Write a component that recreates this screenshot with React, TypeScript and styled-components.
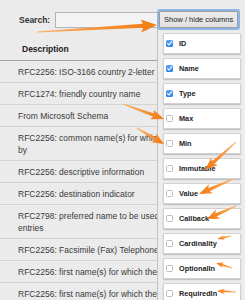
import React from 'react';
import styled, { createGlobalStyle } from 'styled-components';

interface ColumnOption {
  label: string;
  checked: boolean;
}

interface ArrowSpec {
  tail: [number, number];
  tip: [number, number];
  tailWidth: number;
  shaftWidth: number;
  headWidth: number;
  headLength: number;
}

const descriptions = [
  'RFC2256: ISO-3166 country 2-letter code',
  'RFC1274: friendly country name',
  'From Microsoft Schema',
  'RFC2256: common name(s) for which the entity is known by',
  'RFC2256: descriptive information',
  'RFC2256: destination indicator',
  'RFC2798: preferred name to be used when displaying entries',
  'RFC2256: Facsimile (Fax) Telephone Number',
  'RFC2256: first name(s) for which the entity is known by',
  'RFC2256: first name(s) for which the entity is known by',
];

const columns: ColumnOption[] = [
  { label: 'ID', checked: true },
  { label: 'Name', checked: true },
  { label: 'Type', checked: true },
  { label: 'Max', checked: false },
  { label: 'Min', checked: false },
  { label: 'Immutable', checked: false },
  { label: 'Value', checked: false },
  { label: 'Callback', checked: false },
  { label: 'Cardinality', checked: false },
  { label: 'OptionalIn', checked: false },
  { label: 'RequiredIn', checked: false },
];

const arrows: ArrowSpec[] = [
  { tail: [37, 32], tip: [157, 25], tailWidth: 1, shaftWidth: 4, headWidth: 13, headLength: 14 },
  { tail: [123, 104], tip: [164, 119], tailWidth: 1, shaftWidth: 3.5, headWidth: 10, headLength: 11 },
  { tail: [137, 128], tip: [164, 144], tailWidth: 1, shaftWidth: 3.5, headWidth: 10, headLength: 10 },
  { tail: [236, 142], tip: [205, 170], tailWidth: 1, shaftWidth: 3.5, headWidth: 10, headLength: 11 },
  { tail: [233, 179], tip: [199, 194], tailWidth: 1, shaftWidth: 3.5, headWidth: 10, headLength: 11 },
  { tail: [236, 206], tip: [207, 219], tailWidth: 1, shaftWidth: 3.5, headWidth: 10, headLength: 10 },
  { tail: [231, 236], tip: [217, 239], tailWidth: 0.8, shaftWidth: 2, headWidth: 5, headLength: 6 },
  { tail: [232, 268], tip: [216, 263], tailWidth: 0.8, shaftWidth: 2, headWidth: 6, headLength: 6 },
  { tail: [236, 292], tip: [217, 291], tailWidth: 0.8, shaftWidth: 2, headWidth: 6, headLength: 6 },
];

// tapered arrow outline: thin tail, widening shaft, barbed head
const arrowPoints = ({ tail, tip, tailWidth, shaftWidth, headWidth, headLength }: ArrowSpec) => {
  const dx = tip[0] - tail[0];
  const dy = tip[1] - tail[1];
  const len = Math.hypot(dx, dy);
  const ux = dx / len;
  const uy = dy / len;
  const nx = -uy;
  const ny = ux;
  const bx = tip[0] - ux * headLength;
  const by = tip[1] - uy * headLength;
  const pt = (x: number, y: number, w: number) => `${(x + nx * w).toFixed(2)},${(y + ny * w).toFixed(2)}`;
  return [
    pt(tail[0], tail[1], tailWidth / 2),
    pt(bx, by, shaftWidth / 2),
    pt(bx - ux * 2, by - uy * 2, headWidth / 2),
    `${tip[0]},${tip[1]}`,
    pt(bx - ux * 2, by - uy * 2, -headWidth / 2),
    pt(bx, by, -shaftWidth / 2),
    pt(tail[0], tail[1], -tailWidth / 2),
  ].join(' ');
};

const App: React.FC = () => {
  return (
    <>
      <GlobalStyle />
      <Page>
        <TopBar>
          <SearchLabel>Search:</SearchLabel>
          <SearchInput type="text" />
          <ColumnsButton>Show / hide columns</ColumnsButton>
        </TopBar>

        <Table>
          <HeaderCell>Description</HeaderCell>
          {descriptions.map((text, i) => (
            <Row key={i}>{text}</Row>
          ))}
        </Table>

        <ColumnMenu>
          {columns.map(col => (
            <ColumnItem key={col.label}>
              <Check checked={col.checked}>
                {col.checked && (
                  <svg width="7" height="7" viewBox="0 0 7 7">
                    <path d="M1.6 3.6 L3 5 L5.5 1.8" fill="none" stroke="#fff" strokeWidth="1.1" strokeLinecap="round" strokeLinejoin="round" />
                  </svg>
                )}
              </Check>
              <ColumnLabel>{col.label}</ColumnLabel>
            </ColumnItem>
          ))}
        </ColumnMenu>

        <ArrowLayer width="245" height="300" viewBox="0 0 245 300">
          <defs>
            {arrows.map((a, i) => (
              <linearGradient
                key={i}
                id={`arrow-grad-${i}`}
                gradientUnits="userSpaceOnUse"
                x1={a.tail[0]}
                y1={a.tail[1]}
                x2={a.tip[0]}
                y2={a.tip[1]}
              >
                <stop offset="0" stopColor="#fbb36a" />
                <stop offset="0.5" stopColor="#f7923a" />
                <stop offset="1" stopColor="#f47a12" />
              </linearGradient>
            ))}
          </defs>
          {arrows.map((a, i) => (
            <polygon key={i} points={arrowPoints(a)} fill={`url(#arrow-grad-${i})`} />
          ))}
        </ArrowLayer>
      </Page>
    </>
  );
};

const GlobalStyle = createGlobalStyle`
  html, body {
    margin: 0;
    padding: 0;
    background: #ebebeb;
    overflow: hidden;
  }
  body {
    font-family: "Liberation Sans", Arial, sans-serif;
  }
`;

const Page = styled.div`
  position: relative;
  width: 245px;
  height: 300px;
  overflow: hidden;
  background: #ebebeb;
  color: #333;
`;

const TopBar = styled.div`
  display: flex;
  align-items: center;
  height: 21px;
  padding: 9px 0 0 19px;
`;

const SearchLabel = styled.label`
  font-size: 8.5px;
  font-weight: bold;
  color: #333;
  margin-right: 5px;
`;

const SearchInput = styled.input`
  box-sizing: border-box;
  width: 103px;
  height: 16px;
  margin: 0;
  padding: 0 3px;
  border: 1px solid #b3b3b3;
  background: #f3f3f3;
  outline: none;
`;

const ColumnsButton = styled.button`
  box-sizing: border-box;
  width: 79px;
  height: 17px;
  margin: 0 0 0 1px;
  padding: 0;
  border: 1px solid #9c9c9c;
  border-radius: 1px;
  background: linear-gradient(#ececec, #e1e1e1);
  box-shadow: 0 0 0 2px #8db5e6;
  font-family: "Liberation Sans", Arial, sans-serif;
  font-size: 7.5px;
  color: #222;
  white-space: nowrap;
  position: relative;
  z-index: 2;
`;

const Table = styled.div`
  display: flex;
  flex-direction: column;
  width: 157px;
  height: 270px;
  overflow: hidden;
`;

const HeaderCell = styled.div`
  flex-shrink: 0;
  padding: 13px 0 5px 22px;
  line-height: 12px;
  font-size: 8.5px;
  font-weight: bold;
  color: #222;
  border-bottom: 1px solid #a3a3a3;
`;

const Row = styled.div`
  flex-shrink: 0;
  width: 25.6em;
  padding: 4.5px 0 4.5px 18px;
  line-height: 12px;
  font-size: 8.5px;
  color: #3a3a3a;
  border-bottom: 1px solid #d3d3d3;
`;

const ColumnMenu = styled.div`
  position: absolute;
  left: 157px;
  top: 29px;
  right: 0;
  bottom: 0;
  z-index: 1;
  display: flex;
  flex-direction: column;
  gap: 4px;
  padding: 4px 0 0 5px;
  background: #ededed;
  border-left: 1px solid #c2c2c2;
  overflow: hidden;
`;

const ColumnItem = styled.div`
  box-sizing: border-box;
  display: flex;
  align-items: center;
  gap: 6px;
  flex-shrink: 0;
  width: 78px;
  height: 21px;
  padding-left: 2px;
  background: #fff;
  border: 1px solid #d2d2d2;
  border-radius: 1px;
  box-shadow: 0 1px 1.5px rgba(0, 0, 0, 0.22);
`;

const Check = styled.span<{ checked: boolean }>`
  box-sizing: border-box;
  display: flex;
  width: 7px;
  height: 7px;
  border-radius: 1.5px;
  border: ${props => (props.checked ? 'none' : '1px solid #bdbdbd')};
  background: ${props => (props.checked ? 'linear-gradient(#5aa3f5, #2f82ee)' : '#fff')};
`;

const ColumnLabel = styled.span`
  font-size: 7.3px;
  font-weight: bold;
  color: #222;
`;

const ArrowLayer = styled.svg`
  position: absolute;
  left: 0;
  top: 0;
  z-index: 3;
  pointer-events: none;
`;

export default App;
